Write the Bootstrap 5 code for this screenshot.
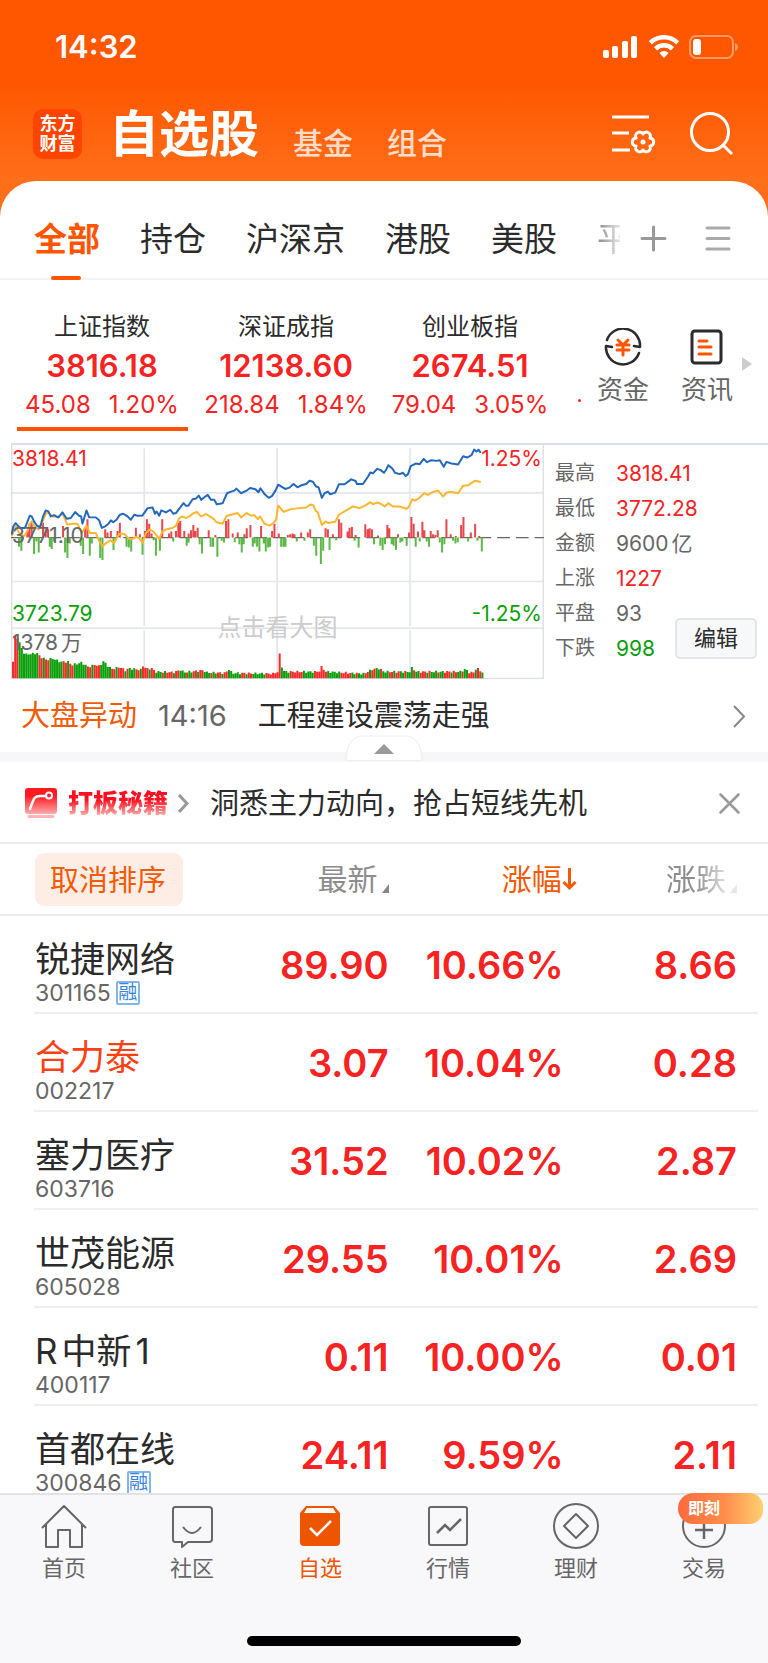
<!DOCTYPE html>
<html lang="zh-CN">
<head>
<meta charset="utf-8">
<meta name="viewport" content="width=device-width, initial-scale=1">
<title>自选股</title>
<link href="https://cdn.jsdelivr.net/npm/bootstrap@5.3.0/dist/css/bootstrap.min.css" rel="stylesheet">
<style>
:root { --up: #f72323; --down: #0a9f0a; --brand: #ff5500; --ink: #2b2b2b; --dim: #666; --line: #ededf0; }
body { font-family: Inter, "Noto Sans CJK SC", sans-serif; color: var(--ink); background: #fff; line-height: 1.2; }
a { color: inherit; text-decoration: none; }
button { border: 0; background: none; padding: 0; color: inherit; line-height: inherit; }
svg { display: block; flex: none; }
.app { height: 100vh; overflow: hidden; }

/* header */
.top-area { background: linear-gradient(#ff5600 0, #ff5600 80px, #ff6f1a 184px, #ff6f1a); }
.status-bar { height: 94px; padding: 0 29px 0 55px; font-size: 31px; font-weight: 600; }
.title-bar { height: 87px; padding: 0 35px 8px 33px; }
.brand-logo { width: 49px; height: 50px; border-radius: 10px; background: #ff4400; font-size: 18px; font-weight: 700; line-height: 20px; }
.page-title { font-size: 50px; font-weight: 700; line-height: 50px; margin-left: 27px; }
.sub-title { font-size: 30px; line-height: 34px; font-weight: 500; color: #ffdcc8; margin: 18px 0 0 34px; }
.head-tool { margin-left: 34px; }
.sheet { border-radius: 36px 36px 0 0; background: #fff; color: var(--ink); }
.group-tabs { height: 99px; padding: 18px 36px 0 34px; border-bottom: 2px solid #f4f4f5; font-size: 33px; line-height: 40px; gap: 40px; white-space: nowrap; }
.group-tabs .on { color: var(--brand); font-weight: 700; position: relative; }
.group-tabs .on::after { content: ""; position: absolute; left: 17px; bottom: -21px; width: 30px; height: 4px; border-radius: 2px; background: var(--brand); }
.fade-tab { flex: none; width: 23px; margin-right: -22px; overflow: hidden; color: #888; -webkit-mask-image: linear-gradient(90deg, #000, #0003); mask-image: linear-gradient(90deg, #000, #0003); }
.group-tools { gap: 38px; }

/* index strip */
.indices { height: 163px; padding: 32px 15px 0 10px; }
.index-tile { width: 184px; height: 119px; text-align: center; position: relative; }
.index-tile.on::after { content: ""; position: absolute; left: 7px; right: 6px; bottom: 0; height: 4px; background: var(--brand); }
.index-name { font-size: 24px; line-height: 30px; }
.index-value { font-size: 31px; line-height: 40px; margin-top: 4px; font-weight: 600; color: var(--up); }
.index-diff { font-size: 24px; line-height: 30px; margin-top: 4px; color: var(--up); gap: 18px; white-space: nowrap; }
.next-tile { width: 3px; height: 3px; border-radius: 50%; background: var(--up); margin-top: 87px; }
.shortcut { font-size: 26px; line-height: 32px; color: var(--dim); }
.shortcut svg { margin-bottom: 8px; }
.more-mark { margin-top: 29px; }

/* intraday chart */
.market { border-top: 2px solid #dcdfe4; margin-left: 11px; }
.chart-box { flex: 0 0 70.4%; height: 234px; position: relative; color: var(--dim); font-size: 21px; line-height: 24px; }
.chart-box svg { width: 100%; height: 100%; }
.chart-box > span { position: absolute; }
.y-top { top: 2px; } .y-mid { top: 79px; } .y-low { top: 157px; } .y-vol { top: 186px; }
.x-left { left: 1px; } .x-right { right: 2px; }
.hint { left: 0; right: 0; top: 171px; text-align: center; font-size: 24px; color: #ccc; }
.unit { margin-left: 3px; }
.stat-list { font-size: 20px; line-height: 35px; padding: 11px 0 0 11px; color: var(--dim); }
.stat-list dt { width: 61px; font-weight: 400; }
.stat-list dd { margin: 0; font-size: 21px; }
.up { color: var(--up); } .down { color: var(--down); }
.edit-btn { position: absolute; right: 11px; bottom: 20px; width: 82px; height: 41px; border: 2px solid #e3e5e9; border-radius: 5px; background: #f7f8fa; font-size: 22px; }

.news { height: 73px; padding: 2px 21px 0 21px; font-size: 29px; }
.news-label { color: #f25a05; }
.news-time { font-size: 29px; color: var(--dim); margin: 0 31px 0 21px; }
.band { height: 10px; background: #f7f7f9; position: relative; }
.band button { position: absolute; left: 50%; bottom: 1px; margin-left: -39px; }
.promo { height: 82px; padding: 2px 28px 0 24px; border-bottom: 2px solid var(--line); font-size: 29px; }
.promo-name { font-size: 25px; font-weight: 900; margin: 0 10px 0 10px; background: linear-gradient(#ff1020 40%, #ff9a98 85%); -webkit-background-clip: text; background-clip: text; color: transparent; }
.promo-text { margin-left: 21px; padding-top: 2px; }

/* quotes */
.quotes { table-layout: fixed; width: 100%; margin: 0; border-collapse: separate; border-spacing: 0; }
.quotes th { height: 72px; border-bottom: 2px solid var(--line); font-weight: 400; font-size: 30px; color: #8d8d8d; padding: 0; vertical-align: middle; }
.quotes td { height: 98px; padding: 0; text-align: right; font-size: 38px; font-weight: 600; color: var(--up); vertical-align: middle; position: relative; line-height: 44px; }
.quotes tr > :first-child { padding-left: 35px; text-align: left; }
.quotes td:first-child { padding-top: 13px; }
.quotes tbody tr:not(:last-child) td::after { content: ""; position: absolute; left: 0; right: 0; bottom: 0; height: 2px; background: #efeff1; }
.quotes tbody tr td:first-child::after { left: 34px; }
.quotes tbody tr td:last-child::after { right: 10px; }
.quotes tr > :last-child { padding-right: 31px; }
.sort-btn { gap: 4px; }
.sorted { color: #f25a05; margin-right: -13px; gap: 0; }
.fade-right { -webkit-mask-image: linear-gradient(90deg, #000 40%, #0003 90%); mask-image: linear-gradient(90deg, #000 40%, #0003 90%); }
.cancel-btn { height: 53px; width: 148px; padding: 4px 2px 0 0; border-radius: 9px; background: #feede5; color: #f25a05; font-size: 29px; }
.stock-name { font-size: 35px; line-height: 42px; font-weight: 400; color: var(--ink); }
.name-hot { color: #fb4015; }
.stock-code { font-size: 23px; line-height: 26px; font-weight: 400; color: var(--dim); gap: 5px; }
.tag { border: 2px solid #82b4ee; color: #3a85dc; width: 24px; height: 24px; font-size: 19px; line-height: 20px; border-radius: 2px; }

/* bottom bar */
.tab-bar { height: 170px; background: #f8f8fb; border-top: 2px solid #e2e3e7; font-size: 22px; color: var(--dim); position: relative; }
.tab-bar a { flex: 1 1 0; padding-top: 7px; position: relative; }
.tab-bar .on { color: #ee5500; }
.tab-bar svg { margin-bottom: 5px; }
.now-badge { position: absolute; top: -2px; right: 5px; width: 85px; height: 31px; padding-left: 10px; border-radius: 16px 14px 14px 16px; background: linear-gradient(90deg, #ff6a3c, #ff8d4c 55%, #ffd070); color: #fff; font-size: 16px; font-weight: 700; line-height: 31px; }
.home-bar { position: absolute; left: 50%; bottom: 17px; width: 274px; margin-left: -137px; height: 10px; border-radius: 5px; background: #000; }
</style>
</head>
<body>
<div class="app d-flex flex-column">
  <header class="top-area text-white flex-shrink-0">
    <div class="status-bar d-flex align-items-center justify-content-between">
      <span>14:32</span>
      <div class="d-flex align-items-center">
        <svg class="me-2" width="37" height="24" viewBox="0 0 37 24" fill="#fff"><rect x="1" y="15" width="6" height="8" rx="2"/><rect x="10" y="11" width="6" height="12" rx="2"/><rect x="20" y="6" width="6" height="17" rx="2"/><rect x="29" y="1" width="6" height="22" rx="2"/></svg>
        <svg class="me-2" width="34" height="24" viewBox="0 0 32 24" fill="#fff"><path d="M16 0C10 0 4.700 2.300.800 6.200l3 3.300A17 17 0 0 1 16 4.600a17 17 0 0 1 12.200 4.900l3-3.300A22 22 0 0 0 16 0z"/><path d="M16 8a14 14 0 0 0-10 4.200l3.100 3.200a9.700 9.700 0 0 1 13.800 0l3.100-3.200A14 14 0 0 0 16 8z"/><path d="M16 16a6.500 6.500 0 0 0-4.600 1.900L16 23l4.600-5.100A6.500 6.500 0 0 0 16 16z"/></svg>
        <svg width="50" height="24" viewBox="0 0 50 24"><rect x="1" y="1" width="43" height="22" rx="6" fill="none" stroke="#ff9a66" stroke-width="2"/><path d="M46 8q3 1 3 4t-3 4z" fill="#ff9a66"/><rect x="4" y="4" width="8" height="16" rx="3" fill="#fff"/></svg>
      </div>
    </div>
    <div class="title-bar d-flex align-items-center">
      <div class="brand-logo d-flex flex-column justify-content-center text-center"><span>东方</span><span>财富</span></div>
      <h1 class="page-title mb-0">自选股</h1>
      <a href="#" class="sub-title">基金</a>
      <a href="#" class="sub-title">组合</a>
      <button class="ms-auto" aria-label="列表设置"><svg width="44" height="42" viewBox="0 0 44 42" fill="none" stroke="#fff" stroke-width="3"><path d="M0 4h37M0 20h17M0 37h18"/><path stroke-linejoin="round" d="M37.900 25C43 25 43 33 37.900 33C40.500 37.400 33.500 41.400 31 37C28.500 41.400 21.500 37.400 24.100 33C19 33 19 25 24.100 25C21.500 20.600 28.500 16.600 31 21C33.500 16.600 40.500 20.600 37.900 25z"/><circle cx="31" cy="29" r="2.500" fill="#fff" stroke="none"/></svg></button>
      <button class="head-tool" aria-label="搜索"><svg width="43" height="44" viewBox="0 0 43 44" fill="none" stroke="#fff" stroke-width="3"><circle cx="20" cy="20" r="18.500"/><path d="M33 33l9 9"/></svg></button>
    </div>
    <div class="sheet">
      <nav class="group-tabs d-flex align-items-center">
        <a href="#" class="on">全部</a><a href="#">持仓</a><a href="#">沪深京</a><a href="#">港股</a><a href="#">美股</a><a href="#" class="fade-tab">平</a>
        <div class="group-tools ms-auto d-flex align-items-center">
          <button aria-label="添加分组"><svg width="27" height="27" viewBox="0 0 27 27" stroke="#999" stroke-width="3" stroke-linecap="round"><path d="M2 13.500h23M13.500 2v23"/></svg></button>
          <button aria-label="管理分组"><svg width="27" height="27" viewBox="0 0 27 27" stroke="#aaa" stroke-width="3" stroke-linecap="round"><path d="M2 3h22M2 13.500h22M2 24h22"/></svg></button>
        </div>
      </nav>
    </div>
  </header>

  <section class="indices d-flex flex-shrink-0">
    <a href="#" class="index-tile on"><div class="index-name">上证指数</div><div class="index-value">3816.18</div><div class="index-diff d-flex justify-content-center"><span>45.08</span><span>1.20%</span></div></a>
    <a href="#" class="index-tile"><div class="index-name">深证成指</div><div class="index-value">12138.60</div><div class="index-diff d-flex justify-content-center"><span>218.84</span><span>1.84%</span></div></a>
    <a href="#" class="index-tile"><div class="index-name">创业板指</div><div class="index-value">2674.51</div><div class="index-diff d-flex justify-content-center"><span>79.04</span><span>3.05%</span></div></a>
    <span class="next-tile ms-3"></span>
    <div class="d-flex ms-auto align-items-start pt-3">
      <a href="#" class="shortcut d-flex flex-column align-items-center"><svg width="38" height="38" viewBox="0 0 38 38" fill="none" stroke="#2b2b2b" stroke-width="2.500" stroke-linecap="round" stroke-linejoin="round"><path d="M3 12A17 17 0 0 1 36 19l-6-1M35 25A17 17 0 0 1 2 18l6 1"/><path stroke="#ff5500" stroke-width="3" d="M14 12l5 5 5-5M13 17h12M13 22h12M19 17v10"/></svg>资金</a>
      <a href="#" class="shortcut d-flex flex-column align-items-center ms-4 me-2 ps-2"><svg width="38" height="38" viewBox="0 0 38 38" fill="none" stroke="#2b2b2b" stroke-width="3" stroke-linecap="round"><rect x="4" y="3" width="29" height="32" rx="3"/><path stroke="#ff5500" d="M11 13h8M11 19h12M11 26h12"/></svg>资讯</a>
      <svg class="more-mark" width="12" height="14" viewBox="0 0 12 14" fill="#ccc"><path d="M1 0l10 7-10 7z"/></svg>
    </div>
  </section>

  <section class="market d-flex flex-shrink-0 position-relative">
    <a href="#" class="chart-box">
      <svg viewBox="36 24 1596 708" preserveAspectRatio="none" fill="none" stroke-linejoin="round">
        <g stroke="#e3e6ef" stroke-width="5"><path d="M435 34v538M435 585v145M833 34v538M833 585v145M1231 34v538M1231 585v145M36 169h1596M36 437h1596"/></g>
        <path d="M38 24v706M1630 24v706M36 578h1596M36 730h1596" stroke="#dcdfe4" stroke-width="4"/>
        <path d="M36 304h1596" stroke="#666" stroke-width="4" stroke-dasharray="38 18"/>
        <path id="volUp" fill="#f52a2a"/><path id="volDown" fill="#0a9f0a"/>
        <path id="barUp" fill="#e8474b"/><path id="barDown" fill="#5db847"/>
        <polyline stroke="#fdb62f" stroke-width="6" points="38,300 50,270 60,290 75,300 85,285 92,262 98,255 105,268 118,280 128,262 140,232 148,228 160,240 178,243 190,230 205,265 220,262 235,262 248,290 262,268 272,290 290,290 300,315 310,330 322,320 333,312 345,320 355,300 363,292 375,293 390,308 400,308 410,302 420,306 430,320 440,290 452,280 462,285 470,295 480,308 490,285 505,278 520,275 530,268 540,245 548,240 560,245 570,240 580,232 592,226 605,240 620,233 640,245 652,258 670,262 682,238 695,235 715,230 725,243 742,230 755,238 765,236 775,248 782,240 795,262 810,268 820,262 830,250 836,207 852,226 875,218 900,215 920,213 932,204 942,207 948,222 955,228 967,266 978,255 985,260 1007,256 1018,235 1040,222 1060,210 1080,215 1100,205 1112,197 1120,203 1133,198 1145,203 1155,210 1166,200 1180,210 1200,210 1220,217 1227,212 1238,188 1245,192 1258,185 1273,170 1285,175 1300,166 1315,162 1330,180 1340,168 1355,166 1375,170 1390,147 1405,146 1425,132 1443,136"/>
        <polyline stroke="#2468bd" stroke-width="6" points="38,295 43,270 50,260 58,270 65,275 78,275 92,238 98,240 105,255 115,270 124,270 132,240 140,222 148,225 155,240 165,236 178,243 190,228 203,247 215,245 228,227 240,238 246,240 250,262 262,222 270,243 290,243 300,252 308,275 318,270 328,262 335,252 342,258 352,250 362,235 372,232 385,240 395,250 405,235 415,238 430,237 445,215 460,213 467,232 472,225 480,238 486,222 500,228 513,220 522,232 530,230 545,210 553,200 560,208 567,208 580,188 590,186 598,177 606,190 615,182 625,175 635,190 645,190 652,203 670,200 683,170 695,165 705,162 711,156 725,170 740,163 752,154 768,158 777,167 783,155 795,172 808,184 818,178 828,162 836,144 857,157 870,153 882,142 894,152 905,146 920,142 930,132 940,135 950,150 957,152 967,184 975,170 985,165 992,173 1007,168 1018,143 1035,143 1055,128 1068,133 1072,142 1090,142 1105,120 1112,107 1120,110 1133,96 1143,100 1153,108 1160,98 1166,85 1178,95 1186,108 1200,112 1210,108 1218,118 1225,112 1233,88 1248,80 1260,82 1272,66 1282,76 1295,70 1310,72 1320,70 1332,90 1340,75 1355,80 1375,83 1390,58 1402,62 1415,55 1423,38 1430,44 1436,38 1443,48"/>
      </svg>
      <span class="y-top x-left up">3818.41</span><span class="y-top x-right up">1.25%</span>
      <span class="y-mid x-left">3771.10</span>
      <span class="y-low x-left down">3723.79</span><span class="y-low x-right down">-1.25%</span>
      <span class="y-vol x-left">1378<span class="unit">万</span></span>
      <span class="hint">点击看大图</span>
    </a>
    <dl class="stat-list mb-0">
      <div class="d-flex"><dt>最高</dt><dd class="up">3818.41</dd></div>
      <div class="d-flex"><dt>最低</dt><dd class="up">3772.28</dd></div>
      <div class="d-flex"><dt>金额</dt><dd>9600<span class="unit">亿</span></dd></div>
      <div class="d-flex"><dt>上涨</dt><dd class="up">1227</dd></div>
      <div class="d-flex"><dt>平盘</dt><dd>93</dd></div>
      <div class="d-flex"><dt>下跌</dt><dd class="down">998</dd></div>
    </dl>
    <button class="edit-btn">编辑</button>
  </section>

  <a href="#" class="news d-flex align-items-center flex-shrink-0">
    <span class="news-label">大盘异动</span><time class="news-time">14:16</time><span>工程建设震荡走强</span>
    <svg class="ms-auto" width="14" height="23" viewBox="0 0 14 23" fill="none" stroke="#888" stroke-width="2"><path d="M1 1l10 10.500L1 22"/></svg>
  </a>
  <div class="band flex-shrink-0">
    <button aria-label="收起"><svg width="78" height="26" viewBox="0 0 78 26"><path d="M1 25.500Q2 1 18 1h42q16 0 17 24.500z" fill="#fff" stroke="#eeeef0"/><path d="M39 9l10 10H29z" fill="#999"/></svg></button>
  </div>
  <div class="promo d-flex align-items-center flex-shrink-0">
    <svg width="34" height="34" viewBox="0 0 34 34" fill="none"><defs><linearGradient id="red" x2="0" y2="1"><stop offset=".3" stop-color="#ff1a22"/><stop offset="1" stop-color="#ffaaaa"/></linearGradient></defs><rect x="1" y="2" width="32" height="26" rx="3" fill="url(#red)"/><path d="M5 30.500h24" stroke="#ffb5b5" stroke-width="3" stroke-linecap="round"/><path d="M6 23c4-12 5-13 10-13h6" stroke="#fff" stroke-width="2.500" stroke-linecap="round"/><circle cx="25" cy="9.500" r="3" stroke="#fff" stroke-width="2"/></svg>
    <strong class="promo-name">打板秘籍</strong>
    <svg width="11" height="19" viewBox="0 0 11 19" fill="none" stroke="#999" stroke-width="3"><path d="M1 1l8 8.500L1 18"/></svg>
    <a href="#" class="promo-text">洞悉主力动向，抢占短线先机</a>
    <button class="ms-auto" aria-label="关闭"><svg width="21" height="21" viewBox="0 0 21 21" stroke="#999" stroke-width="2.500" stroke-linecap="round"><path d="M1.500 1.500l18 18M19.500 1.500l-18 18"/></svg></button>
  </div>

  <main class="flex-grow-1 overflow-hidden">
    <table class="quotes">
      <colgroup><col style="width:34.5%"><col style="width:16.1%"><col style="width:22.8%"><col></colgroup>
      <thead>
        <tr>
          <th><button class="cancel-btn">取消排序</button></th>
          <th><button class="sort-btn d-flex align-items-end ms-auto">最新<svg class="mb-1" width="7" height="9" viewBox="0 0 7 9" fill="#888"><path d="M7 0v9H0z"/></svg></button></th>
          <th><div class="d-flex justify-content-end"><button class="sort-btn sorted d-flex align-items-center">涨幅<svg width="15" height="23" viewBox="0 0 15 23" fill="none" stroke="#f25a05" stroke-width="3"><path d="M7.500 0v20M1.500 14l6 6 6-6"/></svg></button></div></th>
          <th><button class="sort-btn fade-right d-flex align-items-end ms-auto">涨跌<svg class="mb-1" width="7" height="9" viewBox="0 0 7 9" fill="#888"><path d="M7 0v9H0z"/></svg></button></th>
        </tr>
      </thead>
      <tbody>
        <tr><td><div class="stock-name">锐捷网络</div><div class="stock-code d-flex align-items-center">301165<span class="tag d-flex justify-content-center">融</span></div></td><td>89.90</td><td>10.66%</td><td>8.66</td></tr>
        <tr><td><div class="stock-name name-hot">合力泰</div><div class="stock-code">002217</div></td><td>3.07</td><td>10.04%</td><td>0.28</td></tr>
        <tr><td><div class="stock-name">塞力医疗</div><div class="stock-code">603716</div></td><td>31.52</td><td>10.02%</td><td>2.87</td></tr>
        <tr><td><div class="stock-name">世茂能源</div><div class="stock-code">605028</div></td><td>29.55</td><td>10.01%</td><td>2.69</td></tr>
        <tr><td><div class="stock-name">R<span class="mx-1">中新</span>1</div><div class="stock-code">400117</div></td><td>0.11</td><td>10.00%</td><td>0.01</td></tr>
        <tr><td><div class="stock-name">首都在线</div><div class="stock-code d-flex align-items-center">300846<span class="tag d-flex justify-content-center">融</span></div></td><td>24.11</td><td>9.59%</td><td>2.11</td></tr>
      </tbody>
    </table>
  </main>

  <nav class="tab-bar d-flex flex-shrink-0">
    <a href="#" class="d-flex flex-column align-items-center"><svg width="48" height="48" viewBox="0 0 48 48" fill="none" stroke="#666" stroke-width="2" stroke-linejoin="round"><path d="M2 26L24 4l22 22M6 22v23h12V28h12v17h12V22"/></svg>首页</a>
    <a href="#" class="d-flex flex-column align-items-center"><svg width="48" height="48" viewBox="0 0 48 48" fill="none" stroke="#666" stroke-width="2" stroke-linejoin="round"><path d="M7 5h34q3 0 3 3v29q0 3-3 3H20l-6 5v-5H7q-2 0-2-3V8q0-3 2-3z"/><path d="M15 25q9 12 18 0"/></svg>社区</a>
    <a href="#" class="on d-flex flex-column align-items-center"><svg width="48" height="48" viewBox="0 0 48 48" fill="none"><path d="M10 4h28l6 7v29q0 4-4 4H8q-4 0-4-4V11z" fill="#ee5500"/><path d="M11 6h26l3 5H8z" fill="#fff"/><path d="M14 26l7 7 14-14" stroke="#fff" stroke-width="2.500"/></svg>自选</a>
    <a href="#" class="d-flex flex-column align-items-center"><svg width="48" height="48" viewBox="0 0 48 48" fill="none" stroke="#666" stroke-width="2"><rect x="5" y="5" width="38" height="38" rx="2"/><path d="M13 31l8-8 5 5 11-11" stroke-width="2.500"/></svg>行情</a>
    <a href="#" class="d-flex flex-column align-items-center"><svg width="48" height="48" viewBox="0 0 48 48" fill="none" stroke="#666" stroke-width="2"><circle cx="24" cy="24" r="22"/><path d="M24 12l12 12-12 12-12-12z" stroke-linejoin="round"/></svg>理财</a>
    <a href="#" class="d-flex flex-column align-items-center"><svg width="48" height="48" viewBox="0 0 48 48" fill="none" stroke="#666" stroke-width="2"><circle cx="24" cy="24" r="21"/><path d="M15 28h18M24 19v18" stroke-width="2.500"/></svg>交易<span class="now-badge">即刻</span></a>
    <div class="home-bar"></div>
  </nav>
</div>
<script src="https://cdn.jsdelivr.net/npm/bootstrap@5.3.0/dist/js/bootstrap.bundle.min.js"></script>
<script>
// Momentum bars around the previous close: x then height, pairs
const rise = [85,20,91,42,98,45,132,45,140,25,147,25,192,35,258,30,265,55,318,25,325,15,335,20,355,20,362,45,410,30,422,10,437,20,443,55,450,42,457,12,489,55,509,12,516,18,530,20,537,45,543,50,555,20,568,12,575,22,582,38,588,20,595,30,628,22,648,8,680,50,687,55,700,12,715,15,735,10,742,28,753,38,785,35,818,20,825,42,838,12,865,8,872,10,879,12,885,10,905,15,925,15,932,25,978,28,985,25,1000,10,1018,55,1025,45,1044,18,1050,30,1057,32,1068,8,1097,40,1104,25,1110,28,1117,25,1135,6,1163,38,1169,28,1195,10,1228,15,1235,62,1242,42,1255,18,1268,48,1274,22,1293,20,1300,10,1307,8,1314,22,1340,55,1353,10,1368,5,1384,38,1391,62,1413,15,1426,42,1438,5];
const fall = [60,28,67,40,105,50,112,12,119,45,152,28,158,35,165,12,198,45,205,62,212,18,245,25,252,50,272,55,278,18,303,62,310,68,343,38,350,8,382,28,389,30,396,42,430,52,463,8,470,55,482,40,522,12,562,25,568,15,601,20,608,48,634,28,641,28,654,58,667,10,674,15,706,14,720,20,727,45,733,20,760,28,766,18,773,28,780,42,793,18,799,42,806,30,812,28,845,28,852,28,858,28,892,12,915,10,943,25,950,55,964,80,971,40,990,38,1010,8,1065,10,1077,30,1123,20,1142,25,1149,38,1156,20,1176,20,1182,25,1189,38,1202,15,1208,12,1221,25,1248,28,1260,12,1281,12,1288,28,1320,15,1327,45,1334,20,1360,10,1367,18,1374,14,1405,12,1433,10,1446,42];
// Turnover profile: x then height, interpolated between points
const volume = [40,50,47,146,54,116,61,104,67,86,75,72,112,76,120,66,140,56,158,60,180,50,205,50,215,40,245,48,265,34,285,42,298,36,310,52,322,38,335,28,360,34,375,24,385,30,422,26,430,40,438,28,455,30,465,20,520,18,542,26,550,18,608,24,620,18,675,16,685,28,695,16,818,14,832,20,838,76,845,30,852,20,955,20,964,36,975,20,1090,14,1117,28,1135,30,1150,20,1228,20,1235,34,1245,20,1380,20,1393,28,1405,18,1420,18,1427,32,1445,18];
const bars = (list, dir) => { let d = ""; for (let i = 0; i < list.length; i += 2) d += `M${list[i] - 3} 304h6v${dir * list[i + 1]}h-6z`; return d; };
document.getElementById("barUp").setAttribute("d", bars(rise, -1));
document.getElementById("barDown").setAttribute("d", bars(fall, 1));
let up = "", down = "";
for (let n = 0; n < 214; n++) {
  const x = 39 + n * 6.6;
  let i = 0;
  while (i < volume.length - 4 && volume[i + 2] < x) i += 2;
  const t = Math.min(1, Math.max(0, (x - volume[i]) / (volume[i + 2] - volume[i])));
  const h = volume[i + 1] + t * (volume[i + 3] - volume[i + 1]) + Math.sin(n * 2.3) * 3;
  const bar = `M${x} 730h6v${-h}h-6z`;
  const rising = n < 3 || (n > 118 && n < 122) || (n > 5 && Math.sin(n * .55) + Math.sin(n * 1.7) > 0.1);
  if (rising) up += bar; else down += bar;
}
document.getElementById("volUp").setAttribute("d", up);
document.getElementById("volDown").setAttribute("d", down);
</script>
</body>
</html>
